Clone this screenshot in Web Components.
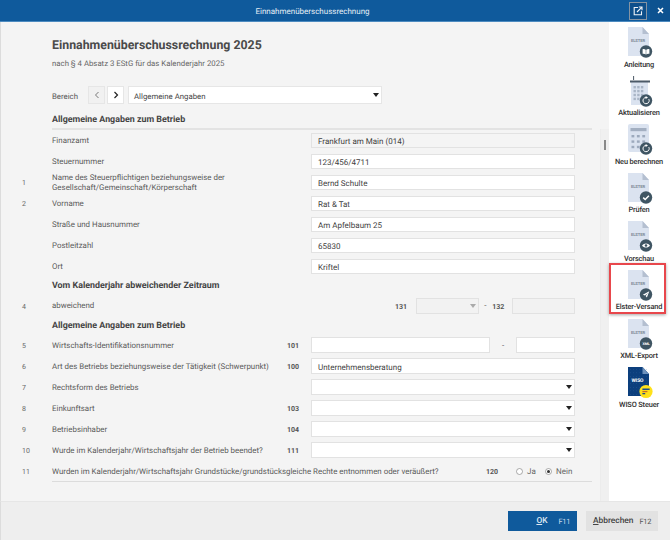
<!DOCTYPE html>
<html lang="de"><head><meta charset="utf-8"><title>Einnahmenüberschussrechnung</title>
<style>
html,body{margin:0;padding:0;width:670px;height:540px;overflow:hidden;background:#f4f4f4;font-family:Roboto,"Open Sans",sans-serif;text-rendering:geometricPrecision;}
</style></head><body>
<app-window>
  <title-bar slot="top">Einnahmenüberschussrechnung</title-bar>
  <form-panel slot="form">
    <page-head slot="head" title="Einnahmenüberschussrechnung 2025" sub="nach § 4 Absatz 3 EStG für das Kalenderjahr 2025"></page-head>
    <section-nav value="Allgemeine Angaben"></section-nav>
    <section-head ruled>Allgemeine Angaben zum Betrieb</section-head>
    <form-row label="Finanzamt"><text-box readonly>Frankfurt am Main (014)</text-box></form-row>
    <form-row label="Steuernummer"><text-box>123/456/4711</text-box></form-row>
    <form-row num="1" label="Name des Steuerpflichtigen beziehungsweise der Gesellschaft/Gemeinschaft/Körperschaft"><text-box>Bernd Schulte</text-box></form-row>
    <form-row num="2" label="Vorname"><text-box>Rat &amp; Tat</text-box></form-row>
    <form-row label="Straße und Hausnummer"><text-box>Am Apfelbaum 25</text-box></form-row>
    <form-row label="Postleitzahl"><text-box>65830</text-box></form-row>
    <form-row label="Ort"><text-box>Kriftel</text-box></form-row>
    <section-head>Vom Kalenderjahr abweichender Zeitraum</section-head>
    <form-row num="4" label="abweichend" style="--label-w:343px;--code-w:0px;--field-w:180px">
      <split-field>
        <field-code>131</field-code><select-box disabled style="width:65px;margin-left:9px"></select-box>
        <span style="width:14px;text-align:center">-</span>
        <field-code>132</field-code><text-box disabled style="width:65px;margin-left:8px"></text-box>
      </split-field>
    </form-row>
    <section-head tight>Allgemeine Angaben zum Betrieb</section-head>
    <form-row num="5" label="Wirtschafts-Identifikationsnummer" code="101">
      <split-field><text-box style="width:179px"></text-box><span style="width:26px;text-align:center">-</span><text-box style="width:59px"></text-box></split-field>
    </form-row>
    <form-row num="6" label="Art des Betriebs beziehungsweise der Tätigkeit (Schwerpunkt)" code="100"><text-box>Unternehmensberatung</text-box></form-row>
    <form-row num="7" label="Rechtsform des Betriebs"><select-box></select-box></form-row>
    <form-row num="8" label="Einkunftsart" code="103"><select-box></select-box></form-row>
    <form-row num="9" label="Betriebsinhaber" code="104"><select-box></select-box></form-row>
    <form-row num="10" label="Wurde im Kalenderjahr/Wirtschaftsjahr der Betrieb beendet?" code="111"><select-box></select-box></form-row>
    <form-row num="11" label="Wurden im Kalenderjahr/Wirtschaftsjahr Grundstücke/grundstücksgleiche Rechte entnommen oder veräußert?" style="--label-w:434px;--code-w:0px;--field-w:89px">
      <split-field>
        <field-code>120</field-code>
        <radio-opt style="margin-left:18px;width:29px">Ja</radio-opt>
        <radio-opt checked>Nein</radio-opt>
      </split-field>
    </form-row>
    <form-end></form-end>
  </form-panel>
  <scroll-rail slot="rail"></scroll-rail>
  <side-bar slot="side">
    <side-action label="Anleitung"><doc-icon badge="book"></doc-icon></side-action>
    <side-action label="Aktualisieren"><doc-icon kind="grid" badge="refresh"></doc-icon></side-action>
    <side-action label="Neu berechnen"><doc-icon kind="calc" badge="refresh"></doc-icon></side-action>
    <side-action label="Prüfen"><doc-icon badge="check"></doc-icon></side-action>
    <side-action label="Vorschau"><doc-icon badge="eye"></doc-icon></side-action>
    <side-action label="Elster-Versand" active><doc-icon badge="plane"></doc-icon></side-action>
    <side-action label="XML-Export"><doc-icon badge="xml"></doc-icon></side-action>
    <side-action label="WISO Steuer"><doc-icon kind="wiso" badge="wiso"></doc-icon></side-action>
  </side-bar>
  <foot-bar slot="foot">
    <dialog-button primary key="O" rest="K" fkey="F11"></dialog-button>
    <dialog-button key="A" rest="bbrechen" fkey="F12"></dialog-button>
  </foot-bar>
</app-window>
<script>
const esc=s=>String(s==null?'':s).replace(/&/g,'&amp;').replace(/</g,'&lt;').replace(/"/g,'&quot;');
function def(name,render){
  customElements.define(name,class extends HTMLElement{
    connectedCallback(){ if(!this.shadowRoot){ this.attachShadow({mode:'open'}).innerHTML=render(this); } }
  });
}
def('app-window',()=>`<style>
:host{display:flex;flex-direction:column;width:670px;height:540px;box-sizing:border-box;background:#f4f4f4;color:#555}
.mid{flex:1;display:flex;min-height:0;border-left:1px solid #dcdcdc}
</style><slot name="top"></slot><div class="mid"><slot name="form"></slot><slot name="rail"></slot><slot name="side"></slot></div><slot name="foot"></slot>`);
def('title-bar',()=>`<style>
:host{display:flex;align-items:center;height:21px;flex:none;background:#0f5a9c;border-bottom:1px solid #4d8bc0;color:#e4edf5;font-size:8px;font-weight:400}
.t{flex:1;text-align:center;padding:2px 4px 0 0}
.pop{width:16px;height:16px;border:1px solid #8594a3;display:flex;align-items:center;justify-content:center;background:#0d4f8b;margin-right:3px}
.x{width:20px;height:21px;display:flex;align-items:center;justify-content:center;background:#0d5290}
</style><div class="t"><slot></slot></div>
<div class="pop"><svg width="10" height="10" viewBox="0 0 10 10" fill="none" stroke="#eef3f8" stroke-width="1.1"><path d="M5 1.5H1.2v7.3h7.3V5.2"/><path d="M4 6 8.7 1.3M5.8 1h3.2v3.2"/></svg></div>
<div class="x"><svg width="7" height="7" viewBox="0 0 7 7" stroke="#fff" stroke-width="1.5"><path d="M1 1l5 5M6 1L1 6"/></svg></div>`);
def('form-panel',()=>`<style>
:host{display:block;width:599px;flex:none;box-sizing:border-box;padding:13px 8px 0 0}
</style><slot name="head"></slot><slot></slot>`);
def('page-head',h=>`<style>
:host{display:block;padding-left:51px}
h1{margin:0 0 -2px;font-size:12.35px;line-height:22px;font-weight:700;color:#4a4a4a}
p{margin:2px 0 -2px;font-size:7.8px;line-height:14px;color:#666}
</style><h1>${esc(h.getAttribute('title'))}</h1><p>${esc(h.getAttribute('sub'))}</p>`);
def('section-nav',h=>`<style>
:host{display:flex;align-items:center;height:18px;margin:17px 0 0 51px;font-size:7.8px;color:#555}
.l{width:36px;padding-top:2px}
.b{width:17px;height:18px;box-sizing:border-box;border:1px solid #e6e6e6;display:flex;align-items:center;justify-content:center;background:#fff;margin-right:2px}
.b.off{background:#f1f1f1}
.s{margin-left:2px;width:254px;height:18px;box-sizing:border-box;background:#fff;border:1px solid #e6e6e6;display:flex;align-items:center;justify-content:space-between;padding:0 2px 0 5px;color:#444}
.s span{padding-top:2px}
i{width:0;height:0;border:3.5px solid transparent;border-top:4px solid #222;border-bottom:0}
</style><span class="l">Bereich</span>
<span class="b off"><svg width="6" height="8" viewBox="0 0 6 8" fill="none" stroke="#777" stroke-width="1"><path d="M4.5 1 1.5 4l3 3"/></svg></span>
<span class="b"><svg width="6" height="8" viewBox="0 0 6 8" fill="none" stroke="#222" stroke-width="1.2"><path d="M1.5 1l3 3-3 3"/></svg></span>
<span class="s"><span>${esc(h.getAttribute('value'))}</span><i></i></span>`);
def('section-head',h=>{
  const ruled=h.hasAttribute('ruled'),tight=h.hasAttribute('tight');
  return `<style>
:host{display:block;margin-left:51px;font-size:8.9px;font-weight:700;color:#444;
 ${ruled?'margin-top:8px;line-height:16px;padding-bottom:0;border-bottom:2px solid #e3e3e3;margin-bottom:2.5px;':
  `line-height:15px;margin-top:${tight?0:-.5}px;padding-bottom:${tight?3.3:4}px;`}}
</style><slot></slot>`});
def('form-row',h=>{
  const num=h.getAttribute('num')||'',code=h.getAttribute('code')||'';
  return `<style>
:host{display:grid;padding-left:21px;grid-template-columns:30px var(--label-w,235px) var(--code-w,24px) var(--field-w,264px);grid-template-rows:15.5px;height:15.5px;margin-bottom:5.5px;align-items:center;font-size:7.9px;color:#5a5a5a}
.n{font-size:7px;color:#666;padding-top:2px}
.l{line-height:10.6px;padding-top:2px}
.c{font-size:7px;font-weight:700;color:#555;padding-top:2px}
</style><span class="n">${esc(num)}</span><span class="l">${esc(h.getAttribute('label'))}</span><span class="c">${esc(code)}</span><slot></slot>`});
def('text-box',h=>{
  const ro=h.hasAttribute('readonly'),dis=h.hasAttribute('disabled');
  return `<style>
:host{display:flex;align-items:center;height:15.5px;box-sizing:border-box;background:${ro?'#f4f4f4':dis?'#f2f2f2':'#fff'};border:1px solid #e2e2e2;padding:2px 0 0 6px;font-size:8px;color:#3f3f3f;white-space:nowrap}
</style><slot></slot>`});
def('select-box',h=>{
  const dis=h.hasAttribute('disabled');
  return `<style>
:host{display:flex;align-items:center;justify-content:flex-end;height:15.5px;box-sizing:border-box;background:${dis?'#f2f2f2':'#fff'};border:1px solid #e2e2e2;padding-right:2px}
i{width:0;height:0;border:3.5px solid transparent;border-top:4px solid ${dis?'#aaa':'#222'};border-bottom:0}
</style><i></i>`});
def('split-field',()=>`<style>
:host{display:flex;align-items:center;height:15.5px;font-size:8px;color:#666}
</style><slot></slot>`);
def('field-code',()=>`<style>:host{display:inline-block;font-size:7px;font-weight:700;color:#555;padding-top:2px}</style><slot></slot>`);
def('radio-opt',h=>`<style>
:host{display:inline-flex;align-items:center;font-size:8px;color:#666;gap:4px;padding-top:1px}
svg{flex:none}
</style><svg width="7" height="7" viewBox="0 0 7 7"><circle cx="3.5" cy="3.5" r="3" fill="#fff" stroke="#888" stroke-width=".7"/>${h.hasAttribute('checked')?'<circle cx="3.5" cy="3.5" r="1.5" fill="#333"/>':''}</svg><slot></slot>`);
def('form-end',()=>`<style>:host{display:block;margin:-3px 0 0 51px;border-top:1px solid #dcdcdc;height:1px}</style>`);
def('scroll-rail',()=>`<style>
:host{display:block;width:9px;flex:none;margin-top:107px;background:#f0f0f0;border-left:1px solid #ececec;box-sizing:border-box;padding:11px 0 0 3px}
b{display:block;width:1.5px;height:10px;background:#8a8a8a}
</style><b></b>`);
def('side-bar',()=>`<style>
:host{display:flex;flex-direction:column;flex:1;background:#fff;padding-top:5px;box-sizing:border-box}
</style><slot></slot>`);
def('side-action',h=>`<style>
:host{display:flex;flex-direction:column;align-items:center;height:48.6px;width:60px;box-sizing:border-box;position:relative;font-size:7.4px;letter-spacing:-.15px;font-weight:500;color:#2f2f2f;white-space:nowrap}
.lab{line-height:10px;margin-top:.5px}
.hi{position:absolute;left:0;right:3px;top:-7px;height:51px;box-sizing:border-box;border:2px solid #e8474c;box-shadow:0 1px 3px rgba(0,0,0,.35);pointer-events:none}
</style><slot></slot><span class="lab">${esc(h.getAttribute('label'))}</span>${h.hasAttribute('active')?'<span class="hi"></span>':''}`);
const badges={
 book:'<path d="M-3.4-2.3c1.2-.3 2.4 0 3.4.7 1-.7 2.2-1 3.4-.7v4.6c-1.2-.3-2.4 0-3.4.6-1-.6-2.2-.9-3.4-.6z" fill="#fff"/><path d="M0-1.6V3" stroke="#3f5563" stroke-width=".5"/>',
 refresh:'<path d="M2.8-1.4A3.1 3.1 0 1 1 0-3" fill="none" stroke="#fff" stroke-width="1"/><path d="M-.4-4.6 2-3-.4-1.4z" fill="#fff"/>',
 check:'<path d="M-2.8.1-.8 2 2.9-1.7" fill="none" stroke="#fff" stroke-width="1.5"/>',
 eye:'<path d="M-4 0C-2-2.8 2-2.8 4 0 2 2.8-2 2.8-4 0z" fill="#fff"/><circle r="1.3" fill="#3f5563"/>',
 plane:'<path d="M3.3-3.3-3.2.2-1.1 1 2 -1.5-.4 1.4.9 3.1z" fill="#fff"/>',
 xml:'<text x="0" y="1.3" text-anchor="middle" font-size="3.6" font-weight="700" fill="#fff" font-family="Roboto">XML</text>'
};
def('doc-icon',h=>{
 const kind=h.getAttribute('kind')||'doc',b=h.getAttribute('badge');
 let body='';
 if(kind==='doc') body='<path d="M1 0H15.5L22 7V29H1z" fill="#dbe3f0"/><path d="M15.5 0 22 7H15.5z" fill="#b4bfd0"/><text x="11" y="14.5" text-anchor="middle" font-size="4.2" font-weight="700" fill="#7d8896" font-family="Roboto">ELSTER</text>';
 if(kind==='grid'){ let d='';for(let y=0;y<4;y++)for(let x=0;x<3;x++)d+=`<rect x="${6.5+x*3.7}" y="${10+y*3.9}" width="2.4" height="2.4" fill="#a9b5c6"/>`;
   body='<rect x="6" y="0" width="1.1" height="4" fill="#5b6773"/><rect x="4" y="6" width="17" height="23" fill="#dbe3f0"/><rect x="3" y="4.5" width="20" height="2" fill="#4c5a68"/>'+d; }
 if(kind==='calc'){ let d='';for(let y=0;y<3;y++)for(let x=0;x<3;x++)d+=`<rect x="${4.5+x*5.4}" y="${11+y*5.4}" width="2.8" height="2.4" fill="#9daabd"/>`;
   body='<rect x="1" y="0" width="21" height="28" rx="2" fill="#dbe3f0"/><rect x="3.5" y="4" width="16" height="3.2" fill="#a3afc1"/>'+d; }
 if(kind==='wiso'){ let d='';for(let y=0;y<8;y++)for(let x=0;x<6;x++)d+=`<rect x="${3+x*3.2}" y="${2+y*3.6}" width=".5" height=".5" fill="#3f6fa8"/>`;
   body='<path d="M1 0H15.5L22 7V29H1z" fill="#0c3f7d"/><path d="M15.5 0 22 7H15.5z" fill="#6f93bd"/>'+d+'<text x="10.5" y="15" text-anchor="middle" font-size="5" font-weight="700" fill="#fff" font-family="Roboto">WISO</text>'; }
 const badge= b==='wiso'
  ? '<g transform="translate(19,24.5)"><circle r="6.6" fill="#ffe11a"/><rect x="-3.6" y="-3" width="7.2" height="1.5" fill="#1c4f8a"/><rect x="-3.6" y="-.6" width="5" height="1.3" fill="#c8692a"/><rect x="-3.6" y="1.5" width="2.8" height="1.3" fill="#1c4f8a"/></g>'
  : `<g transform="translate(19,24.5)"><circle r="6.2" fill="#3f5563"/>${badges[b]||''}</g>`;
 return `<style>:host{display:block;width:27px;height:32px;margin-left:2px}svg{display:block}</style><svg width="27" height="32" viewBox="0 0 27 32">${body}${badge}</svg>`;
});
def('foot-bar',()=>`<style>
:host{display:flex;justify-content:flex-end;gap:9px;flex:none;height:39px;box-sizing:border-box;background:#eeeeee;border-top:1px solid #e6e6e6;border-left:1px solid #dcdcdc;padding:9px 12px 0 0}
</style><slot></slot>`);
def('dialog-button',h=>{
 const p=h.hasAttribute('primary');
 return `<style>
:host{display:flex;align-items:center;justify-content:flex-end;box-sizing:border-box;height:20px;width:${p?69:72}px;background:${p?'#0f5a9c':'#e2e2e2'};color:${p?'#dfe9f3':'#444'};font-size:8.4px;font-weight:500;padding-right:7px;gap:${p?'11px':'6px'}}
u{text-decoration:underline}
.f{font-weight:400;font-size:7.4px;letter-spacing:-.3px;color:${p?'#c9dbec':'#555'}}
</style><span><u>${esc(h.getAttribute('key'))}</u>${esc(h.getAttribute('rest'))}</span><span class="f">${esc(h.getAttribute('fkey'))}</span>`});
</script>
</body></html>
